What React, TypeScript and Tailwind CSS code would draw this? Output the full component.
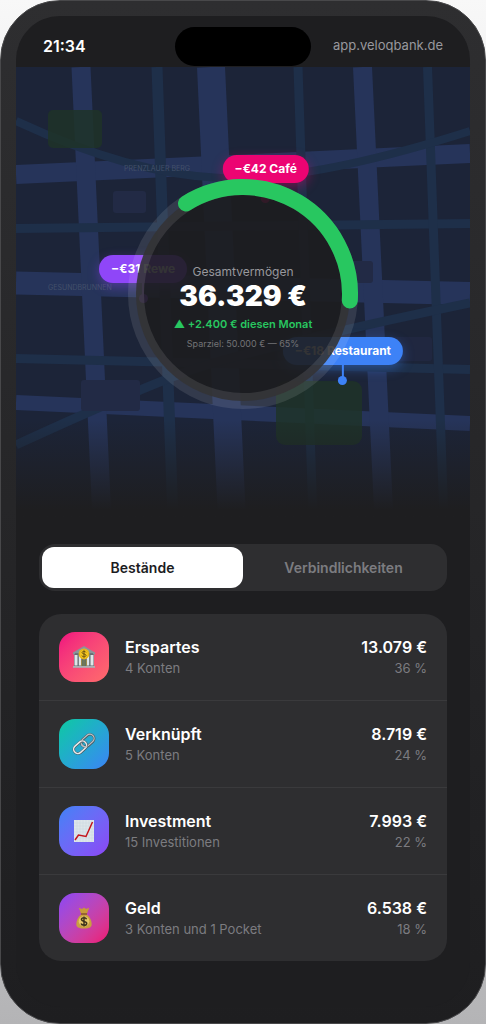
import React, { useState } from 'react';

interface Position {
  title: string;
  detail: string;
  amount: string;
  share: string;
  tile: string;
  icon: React.ReactNode;
}

interface Pin {
  label: string;
  place: string;
  fill: string;
  glow: string;
}

const BankIcon = () => (
  <svg viewBox="0 0 24 24" className="w-6 h-6" aria-hidden="true">
    <path d="M1 7.500 12 1l11 6.500v2H1z" fill="#8b9499" />
    <path d="M3 8h18v2H3z" fill="#6c757b" />
    <path d="M2 9.500h20V21H2z" fill="#5f686e" />
    <path d="M2.500 10h3v10.500h-3zM6.800 10h2.400v10.500H6.800zM14.800 10h2.400v10.500h-2.400zM18.500 10h3v10.500h-3z" fill="#dfe5e8" />
    <path d="M9.600 15h4.800v6.500H9.600z" fill="#3f6572" />
    <path d="M9.300 15h1v6.500h-1zM11.600 15h.8v6.500h-.8zM13.700 15h1v6.500h-1z" fill="#b79537" />
    <path d="M1 21h22v1.800H1z" fill="#aab1b5" />
    <circle cx="12" cy="9" r="5.400" fill="#f2c521" />
    <circle cx="12" cy="9" r="4.600" fill="none" stroke="#d9a514" strokeWidth=".6" />
    <path d="M13.900 7.400c-.3-.8-1-1.100-1.900-1.100-1.100 0-1.900.5-1.900 1.300 0 1.900 3.900.9 3.900 2.900 0 .8-.9 1.300-2 1.300s-1.900-.4-2.100-1.200M12 5.400v7.200" fill="none" stroke="#6b5310" strokeWidth="1" />
  </svg>
);

const LinkIcon = () => (
  <svg viewBox="0 0 24 24" className="w-6 h-6" aria-hidden="true">
    <g fill="none" transform="rotate(-42 12 12)">
      <rect x="9.800" y="7.800" width="14.500" height="8.400" rx="4.200" stroke="#4d565c" strokeWidth="2.500" />
      <rect x="9.800" y="7.600" width="14.500" height="8.400" rx="4.200" stroke="#b9c1c6" strokeWidth="1.300" />
      <rect x="-.3" y="7.800" width="14.500" height="8.400" rx="4.200" stroke="#4d565c" strokeWidth="2.500" />
      <rect x="-.3" y="7.600" width="14.500" height="8.400" rx="4.200" stroke="#e6eaec" strokeWidth="1.500" />
      <path d="M9.800 10.800V12a4.200 4.200 0 0 0 3 4" stroke="#b9c1c6" strokeWidth="1.400" />
    </g>
  </svg>
);

const ChartIcon = () => (
  <svg viewBox="0 0 24 24" className="w-6 h-6" aria-hidden="true">
    <rect x="2" y="1" width="20" height="22" fill="#dde6ea" />
    <path d="M5 1v22M8 1v22M11 1v22M14 1v22M17 1v22M20 1v22M2 4h20M2 7h20M2 10h20M2 13h20M2 16h20M2 19h20" stroke="#c9d6dc" strokeWidth=".5" />
    <path d="M3 21l3.500-5 7.500 1.500L20.500 3" fill="none" stroke="#c4161c" strokeWidth="1.500" />
  </svg>
);

const MoneyIcon = () => (
  <svg viewBox="0 0 24 24" className="w-6 h-6" aria-hidden="true">
    <path d="M6.800 1.800 10 3l2-1.500L14 3l3.200-1.200L15 7.500H9z" fill="#c79a3a" />
    <path d="M9.200 8.500C6 11 4.300 14.500 4.300 18c0 3 2 4.500 7.700 4.500s7.700-1.500 7.700-4.500c0-3.500-1.700-7-4.900-9.500z" fill="#c9a040" />
    <path d="M9 7.200h6v1.600H9z" fill="#8a5f1c" />
    <circle cx="12" cy="15.300" r="5.300" fill="#e8c868" />
    <path d="M14.600 13.300c-.4-1.100-1.400-1.500-2.600-1.500-1.500 0-2.600.7-2.600 1.800 0 2.500 5.300 1.200 5.300 3.800 0 1.100-1.200 1.800-2.700 1.800s-2.600-.6-2.900-1.700M12 10.400v10" fill="none" stroke="#40351c" strokeWidth="1.500" />
  </svg>
);

const assets: Position[] = [
  { title: 'Erspartes', detail: '4 Konten', amount: '13.079 €', share: '36 %', tile: 'from-[#f0047f] to-[#ff6b6b]', icon: <BankIcon /> },
  { title: 'Verknüpft', detail: '5 Konten', amount: '8.719 €', share: '24 %', tile: 'from-[#0fc9a0] to-[#3b82f6]', icon: <LinkIcon /> },
  { title: 'Investment', detail: '15 Investitionen', amount: '7.993 €', share: '22 %', tile: 'from-[#3b82f6] to-[#8b45f6]', icon: <ChartIcon /> },
  { title: 'Geld', detail: '3 Konten und 1 Pocket', amount: '6.538 €', share: '18 %', tile: 'from-[#8b45f6] to-[#f00470]', icon: <MoneyIcon /> },
];

const pins: Pin[] = [
  { label: '−€42 Café', place: 'left-[55%] top-[88px]', fill: 'bg-[#ec0472]', glow: 'shadow-[0_4px_12px_rgba(236,4,114,0.4)]' },
  { label: '−€31 Rewe', place: 'left-[28%] top-[188px]', fill: 'bg-[#8f46f8]', glow: 'shadow-[0_4px_12px_rgba(143,70,248,0.4)]' },
  { label: '−€18 Restaurant', place: 'left-[72%] top-[270px]', fill: 'bg-[#3d82f7]', glow: 'shadow-[0_4px_12px_rgba(61,130,247,0.4)]' },
];

const CityMap = () => (
  <svg viewBox="16 67 454 453" preserveAspectRatio="xMidYMid slice" className="absolute inset-0 w-full h-full" aria-hidden="true">
    <rect x="16" y="67" width="454" height="453" fill="#1c2438" />
    <g stroke="#26345a" fill="none">
      <path d="M16 174.500 470 153.500" strokeWidth="19" />
      <path d="M16 283 470 293.500" strokeWidth="23" />
      <path d="M16 402.500 470 423.500" strokeWidth="15" />
      <path d="M81 67 102 520" strokeWidth="19" />
      <path d="M211 67 232 520" strokeWidth="28" />
      <path d="M362.500 67 384 520" strokeWidth="19" />
    </g>
    <g stroke="#1e2f49" fill="none">
      <path d="M16 228.500 470 223.500" strokeWidth="9" />
      <path d="M16 358.500 470 369.500" strokeWidth="9" />
      <path d="M157 67 173 520" strokeWidth="11" />
      <path d="M298 67 313 520" strokeWidth="9" />
      <path d="M427.500 67 444 520" strokeWidth="9" />
      <path d="M16 121Q130 174 220 178T470 131" strokeWidth="8" />
      <path d="M16 445Q120 397 180 374T470 303" strokeWidth="9" />
    </g>
    <g fill="#1f3327" fillOpacity=".82">
      <rect x="48" y="110" width="54" height="38" rx="5" />
      <rect x="276" y="381" width="86" height="64" rx="9" />
    </g>
    <g fill="#222a45">
      <rect x="113" y="191" width="33" height="22" rx="3" />
      <rect x="81" y="380" width="59" height="31" rx="3" />
      <rect x="340" y="261" width="33" height="22" rx="3" />
      <rect x="385" y="337" width="47" height="24" rx="3" fillOpacity=".7" />
    </g>
    <g fill="#43506a" fontSize="7" fontFamily="Inter, sans-serif">
      <text x="124" y="171">PRENZLAUER BERG</text>
      <text x="48" y="290">GESUNDBRUNNEN</text>
    </g>
  </svg>
);

const MapPin: React.FC<{ pin: Pin }> = ({ pin }) => (
  <div className={`absolute -translate-x-1/2 flex flex-col items-center ${pin.place}`}>
    <span className={`rounded-full px-3 text-xs leading-7 font-bold text-white whitespace-nowrap ${pin.fill} ${pin.glow}`}>
      {pin.label}
    </span>
    <span className={`w-0.5 h-3 ${pin.fill}`} />
    <span className={`w-[9px] h-[9px] rounded-full -mt-px ${pin.fill}`} />
  </div>
);

const WealthRing = () => (
  <div className="absolute inset-0 flex items-center justify-center">
    <div className="relative w-[230px] h-[230px] flex items-center justify-center">
      <svg viewBox="0 0 230 230" className="absolute inset-0 w-full h-full" aria-hidden="true">
        <circle cx="115" cy="115" r="107" fill="#1d1d1f" fillOpacity=".9" />
        <circle cx="115" cy="115" r="107" fill="none" stroke="#fff" strokeOpacity=".1" strokeWidth="16" />
        <path d="M58 24.500A107 107 0 0 1 221.800 121.500" fill="none" stroke="#28c760" strokeWidth="16" strokeLinecap="round" />
      </svg>
      <div className="relative flex flex-col items-center whitespace-nowrap pt-7">
        <p className="text-xs leading-4 text-[#98989d]">Gesamtvermögen</p>
        <p className="text-[28px] leading-8 font-black text-white">36.329 €</p>
        <p className="mt-1 text-[11px] leading-4 font-semibold text-[#28c760]">▲ +2.400 € diesen Monat</p>
        <p className="mt-1 text-[9px] leading-4 text-[#737376]">Sparziel: 50.000 € — 65%</p>
      </div>
    </div>
  </div>
);

const PositionRow: React.FC<{ position: Position }> = ({ position }) => (
  <li className="flex items-center gap-4 px-5 pt-[18px] pb-[18px] border-b border-[#3a3a3c] last:border-b-0">
    <div className={`w-[50px] h-[50px] rounded-2xl bg-linear-135 flex items-center justify-center ${position.tile}`}>
      {position.icon}
    </div>
    <div className="flex-1">
      <h3 className="text-base leading-[22px] font-semibold text-white">{position.title}</h3>
      <p className="text-[13px] leading-5 text-[#7c7c80]">{position.detail}</p>
    </div>
    <div className="text-right">
      <p className="text-base leading-[22px] font-semibold text-white">{position.amount}</p>
      <p className="text-[13px] leading-5 text-[#7c7c80]">{position.share}</p>
    </div>
  </li>
);

const App: React.FC = () => {
  const [activeTab, setActiveTab] = useState<'assets' | 'debts'>('assets');

  return (
    <div className="min-h-screen flex flex-col bg-linear-to-b from-[#f8f8f8] to-[#b4b4b6] font-['Inter',sans-serif]">
      <div className="flex-1 flex flex-col rounded-[60px] border border-[#48484a] bg-linear-to-b from-[#2e2e30] to-[#1e1e20] px-[15px] pt-[15px] pb-4">
        <div className="flex-1 flex flex-col rounded-[44px] bg-[#1e1e20] overflow-hidden">
          <header className="relative h-[51px] flex items-center justify-between px-[27px] pt-2">
            <span className="text-base font-semibold text-white">21:34</span>
            <div className="absolute left-1/2 top-[11px] -translate-x-1/2 w-[136px] h-[39px] rounded-full bg-black" />
            <span className="text-[13px] text-[#98989d]">app.veloqbank.de</span>
          </header>

          <section className="relative h-[453px] overflow-hidden">
            <CityMap />
            {pins.map((pin) => (
              <MapPin key={pin.label} pin={pin} />
            ))}
            <div className="absolute inset-x-0 bottom-0 h-[100px] bg-linear-to-b from-transparent to-[#1e1e20] to-90%" />
            <WealthRing />
          </section>

          <main className="px-[23px] pt-6 pb-8">
            <div role="tablist" className="flex rounded-2xl bg-[#2e2e30] p-[3px]">
              <button
                role="tab"
                aria-selected={activeTab === 'assets'}
                onClick={() => setActiveTab('assets')}
                className={`flex-1 h-[41px] rounded-xl text-sm font-semibold ${
                  activeTab === 'assets' ? 'bg-white text-[#1c1c1e]' : 'text-[#7c7c80]'
                }`}
              >
                Bestände
              </button>
              <button
                role="tab"
                aria-selected={activeTab === 'debts'}
                onClick={() => setActiveTab('debts')}
                className={`flex-1 h-[41px] rounded-xl text-sm font-semibold ${
                  activeTab === 'debts' ? 'bg-white text-[#1c1c1e]' : 'text-[#7c7c80]'
                }`}
              >
                Verbindlichkeiten
              </button>
            </div>

            {activeTab === 'assets' ? (
              <ul className="mt-[23px] rounded-[22px] bg-[#2e2e30]">
                {assets.map((position) => (
                  <PositionRow key={position.title} position={position} />
                ))}
              </ul>
            ) : (
              <p className="mt-[23px] rounded-[22px] bg-[#2e2e30] p-5 text-sm text-[#7c7c80]">Keine Verbindlichkeiten</p>
            )}
          </main>
        </div>
      </div>
    </div>
  );
};

export default App;
